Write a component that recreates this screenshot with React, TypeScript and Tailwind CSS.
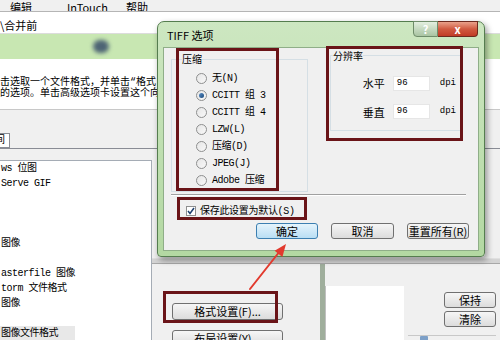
const simsun = { fontFamily: '"Liberation Mono", "Noto Sans CJK SC", monospace' };
const ui = { fontFamily: '"Noto Sans CJK SC", "Liberation Sans", sans-serif' };

function Radio({ label, checked }: { label: string; checked?: boolean }) {
  return (
    <div className="flex items-center h-[17px] gap-[5px]">
      <div className="w-[11px] h-[11px] rounded-full border border-[#8e8f8f] bg-gradient-to-br from-[#e6e6e6] to-[#f8f8f8] flex items-center justify-center">
        {checked && <div className="w-[5px] h-[5px] rounded-full bg-gradient-to-br from-[#5a8fc8] to-[#1c4a7a]" />}
      </div>
      <span className="text-[10px] tracking-[-0.5px] text-black" style={simsun}>{label}</span>
    </div>
  );
}

function Btn({ label, primary, className = '' }: { label: string; primary?: boolean; className?: string }) {
  return (
    <div
      className={`h-[16px] shrink-0 rounded-[3px] border flex items-center justify-center text-[11px] text-black ${
        primary
          ? 'border-[#3c7fb1] bg-gradient-to-b from-[#e5f4fc] to-[#b9def4]'
          : 'border-[#707070] bg-gradient-to-b from-[#f6f6f6] to-[#dcdcdc]'
      } ${className}`}
      style={ui}
    >
      {label}
    </div>
  );
}

const listRows = ['ws 位图', 'Serve GIF', '', '', '', '图像', '', 'asterfile 图像', 'torm 文件格式', '图像', '', '图像文件格式'];

export default function App() {
  return (
    <div className="relative w-[500px] h-[340px] overflow-hidden bg-[#f0f0f0]">
      {/* window behind the dialog */}
      <div className="flex flex-col h-full">
        <div className="h-[12px] shrink-0 bg-[#f0f0f0] border-b border-[#b5b5b5] flex items-end overflow-hidden">
          <div className="flex text-[11px] leading-[11px] -mb-[2px] text-black" style={ui}>
            <span className="ml-[10px]">编辑</span>
            <span className="ml-[35px]">InTouch</span>
            <span className="ml-[18px]">帮助</span>
          </div>
        </div>
        <div className="h-[22px] shrink-0 bg-white border-b border-[#dcdcdc] flex items-center pt-[6px]">
          <span className="text-[11px] text-black" style={ui}>\合并前</span>
        </div>
        <div className="h-[25px] shrink-0 bg-[#c8e7b2] flex items-center">
          <div className="ml-[93px] w-[16px] h-[13px] rounded-full bg-[#4d6474] blur-[2px]" />
        </div>
        <div className="h-[51px] shrink-0 bg-white border-b border-[#c8c8c8] flex flex-col pt-[18px]">
          <div className="text-[10px] leading-[11px] text-black whitespace-nowrap" style={simsun}>击选取一个文件格式，并单击“格式</div>
          <div className="text-[10px] leading-[11px] text-black whitespace-nowrap" style={simsun}>的选项。单击高级选项卡设置这个向</div>
        </div>
        <div className="h-[50px] shrink-0 bg-[#f0f0f0] flex flex-col justify-end">
          <div className="w-[10px] h-[15px] border border-l-0 border-[#898c95] bg-white flex items-center overflow-hidden">
            <span className="text-[10px] -ml-[5px]" style={simsun}>间</span>
          </div>
          <div className="h-[12px] border-t border-[#898c95]" />
        </div>
        <div className="flex-1 min-h-0 flex overflow-hidden">
          <div className="w-[152px] shrink-0 bg-white border-t border-r border-[#a5acb5] flex flex-col">
            {listRows.map((r, i) => (
              <div key={i} className="h-[15px] shrink-0 flex items-center">
                <span
                  className={`text-[10px] tracking-[-0.5px] text-black whitespace-nowrap px-[1px] ${i === 11 ? 'bg-[#e8e8e8] w-[75px]' : ''}`}
                  style={simsun}
                >
                  {r}
                </span>
              </div>
            ))}
          </div>
          <div className="flex-1 min-w-0 flex flex-col overflow-hidden">
            <div className="h-[98px] shrink-0" />
            <div className="h-[6px] shrink-0 border-t border-[#e0e0e0] bg-[#d4d4d4] border-b border-b-[#a8a8a8]" />
            <div className="flex-1 min-h-0 flex">
              <div className="w-[168px] shrink-0 flex flex-col pl-[20px] pt-[39px] gap-[10px]">
                <Btn label="格式设置(F)..." className="w-[111px] h-[17px]" />
                <Btn label="布局设置(Y)..." className="w-[111px] h-[17px]" />
              </div>
              <div className="w-[5px] shrink-0 bg-[#9fae9c]" />
              <div className="w-[79px] shrink-0 flex flex-col">
                <div className="h-[22px] shrink-0" />
                <div className="flex-1 bg-white border-l border-[#c0c0c0]" />
              </div>
              <div className="flex-1 min-w-0 flex flex-col items-end pr-[4px] pt-[28px] gap-[3px]">
                <Btn label="保持" className="w-[52px] h-[15px]" />
                <Btn label="清除" className="w-[52px] h-[15px]" />
                <div className="w-[88px] mt-[5px] border-t border-[#c8c8c8] h-[10px] flex items-end pl-[12px]">
                  <div className="w-[8px] h-[7px] bg-[#7da0c8] rounded-[1px]" />
                </div>
              </div>
            </div>
          </div>
        </div>
      </div>

      {/* TIFF dialog */}
      <div className="absolute left-[157px] top-[21px] w-[328px] h-[236px] rounded-t-[7px] rounded-b-[4px] border border-[#557d4f] bg-gradient-to-b from-[#cde7c1] to-[#b3d8a2] shadow-[2px_3px_6px_rgba(0,0,0,0.4)] flex flex-col">
        <div className="h-[25px] shrink-0 flex items-start justify-between">
          <span className="ml-[9px] mt-[5px] text-[11px] text-black" style={ui}>TIFF 选项</span>
          <div className="flex mr-[6px] -mt-[1px]">
            <div className="w-[25px] h-[16px] rounded-bl-[4px] border border-[#6f8c6a] bg-gradient-to-b from-[#e3efe0] to-[#a9c4a2] flex items-center justify-center text-[11px] font-bold text-white" style={ui}>?</div>
            <div className="w-[40px] h-[16px] rounded-br-[4px] border border-l-0 border-[#6d2a1e] bg-gradient-to-b from-[#e9a18a] via-[#d05a40] to-[#c13b26] flex items-center justify-center text-[11px] font-bold text-white" style={ui}>x</div>
          </div>
        </div>
        <div className="mx-[5px] mb-[5px] flex-1 min-h-0 bg-[#f0f0f0] border border-[#8fae88] flex flex-col">
          <div className="flex pt-[11px] shrink-0">
            <div className="ml-[7px] w-[137px] h-[133px] shrink-0 border border-[#d5dfe5] relative pl-[24px] pt-[10px]">
              <span className="absolute -top-[7px] left-[10px] bg-[#f0f0f0] text-[10px]" style={simsun}>压缩</span>
              <Radio label="无(N)" />
              <Radio label="CCITT 组 3" checked />
              <Radio label="CCITT 组 4" />
              <Radio label="LZW(L)" />
              <Radio label="压缩(D)" />
              <Radio label="JPEG(J)" />
              <Radio label="Adobe 压缩" />
            </div>
            <div className="ml-[22px] w-[131px] h-[76px] shrink-0 border border-[#d5dfe5] relative self-start mt-[-4px] pt-[19px] pr-[4px] flex flex-col gap-[12px]">
              <span className="absolute -top-[6px] left-[2px] bg-[#f0f0f0] text-[10px]" style={simsun}>分辨率</span>
              {['水平', '垂直'].map((l) => (
                <div key={l} className="flex items-center justify-end gap-[8px]">
                  <span className="text-[11px]" style={ui}>{l}</span>
                  <div className="w-[37px] h-[15px] bg-white border border-[#e6e6e6] flex items-center pl-[3px] text-[9px]" style={simsun}>96</div>
                  <span className="ml-[2px] text-[9px]" style={simsun}>dpi</span>
                </div>
              ))}
            </div>
          </div>
          <div className="ml-[7px] w-[295px] mt-[2px] shrink-0 border-t border-[#a0a0a0] border-b border-b-white" />
          <div className="flex items-center h-[20px] shrink-0 pl-[22px] mt-[5px] gap-[4px]">
            <div className="w-[10px] h-[10px] border border-[#8e8f8f] bg-white flex items-center justify-center">
              <svg width="8" height="8" viewBox="0 0 8 8"><path d="M1 4 L3 6.5 L7 1" stroke="#1c3f6e" strokeWidth="1.5" fill="none" /></svg>
            </div>
            <span className="text-[10px] tracking-[-0.3px]" style={simsun}>保存此设置为默认(S)</span>
          </div>
          <div className="flex pl-[92px] gap-[13px] mt-[2px] shrink-0">
            <Btn label="确定" primary className="w-[62px]" />
            <Btn label="取消" className="w-[63px]" />
            <Btn label="重置所有(R)" className="w-[62px]" />
          </div>
        </div>
      </div>

      {/* annotation boxes */}
      <div className="absolute left-[176px] top-[48px] w-[103px] h-[143px] border-[3px] border-[#6a1418]" />
      <div className="absolute left-[326px] top-[46px] w-[137px] h-[95px] border-[3px] border-[#6a1418]" />
      <div className="absolute left-[177px] top-[197px] w-[130px] h-[23px] border-[3px] border-[#6a1418]" />
      <div className="absolute left-[163px] top-[291px] w-[115px] h-[32px] border-[3px] border-[#6a1418]" />

      {/* arrow */}
      <svg className="absolute left-[240px] top-[238px]" width="56" height="60" viewBox="0 0 56 60">
        <path d="M10 51 L40 13" stroke="#e23a2e" strokeWidth="2" strokeLinecap="round" />
        <polygon points="46,6 42.4,19 34.6,12.8" fill="#e23a2e" />
      </svg>
    </div>
  );
}
